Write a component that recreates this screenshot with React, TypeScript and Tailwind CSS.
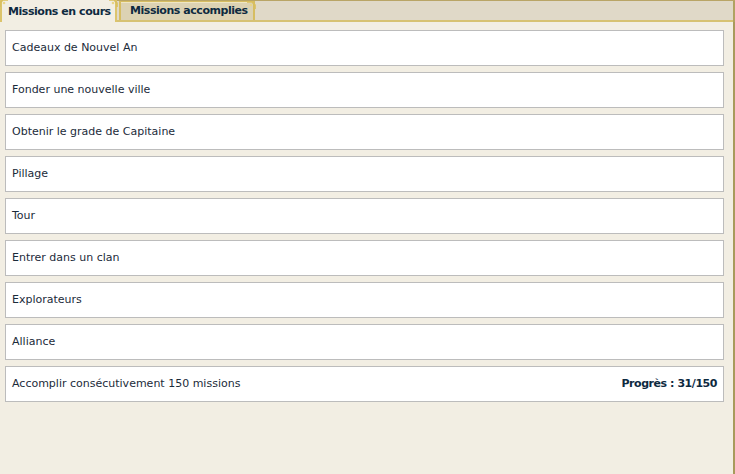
import React from 'react';

const missions = [
  'Cadeaux de Nouvel An',
  'Fonder une nouvelle ville',
  'Obtenir le grade de Capitaine',
  'Pillage',
  'Tour',
  'Entrer dans un clan',
  'Explorateurs',
  'Alliance',
];

function Corner({ flip = false }: { flip?: boolean }) {
  return (
    <svg
      width="9"
      height="9"
      viewBox="0 0 9 9"
      className={`absolute -top-px ${flip ? '-left-[3px] -scale-x-100' : '-right-[3px]'}`}
    >
      <path d="M0 1 H5 L8 4 V8" fill="none" stroke="#d9bf5e" strokeWidth="1.6" />
      <circle cx="4" cy="4" r="1.3" fill="#e8d589" />
    </svg>
  );
}

export default function App() {
  return (
    <div className="w-[735px] h-[474px] bg-[#f2eee3] font-['DejaVu_Sans',Verdana,sans-serif] text-[11px] text-[#1b2b3a] flex flex-col overflow-hidden">
      {/* Tabs */}
      <div className="h-[22px] flex items-end bg-[#e0d9c8] border-t border-[#b9a566] border-b-2 border-b-[#d7c272] shrink-0 relative">
        <div className="relative h-[22px] -mb-[2px] w-[117px] bg-[#f2eee3] border-x-2 border-[#dcc46c] flex items-center pt-[3px] pl-[6px] font-bold tracking-[-0.45px] whitespace-nowrap text-[#0e2a3f]">
          Missions en cours
          <Corner />
          <Corner flip />
        </div>
        <div className="relative ml-[2px] h-[19px] w-[136px] bg-[#dcd2b3] border-x-2 border-t border-[#d6bd62] flex items-center pt-[1px] pl-[9px] font-bold tracking-[-0.45px] whitespace-nowrap text-[#0e2a3f] shadow-[inset_0_1px_0_#efe6c4]">
          Missions accomplies
          <Corner />
        </div>
        <div className="absolute right-0 top-0 bottom-[-2px] w-[2px] bg-[#b0a262]" />
      </div>

      {/* Content */}
      <div className="flex-1 flex flex-col gap-[6px] pt-[8px] pl-[5px] pr-[9px] border-r-2 border-[#a89a5c]">
        {missions.map((m) => (
          <div key={m} className="h-[36px] bg-white border border-[#bcbcbc] flex items-center px-[6px]">
            {m}
          </div>
        ))}
        <div className="h-[36px] bg-white border border-[#bcbcbc] flex items-center justify-between px-[6px]">
          <span>Accomplir consécutivement 150 missions</span>
          <span className="font-bold tracking-[-0.45px] text-[#0e2a3f]">Progrès : 31/150</span>
        </div>
      </div>
    </div>
  );
}
